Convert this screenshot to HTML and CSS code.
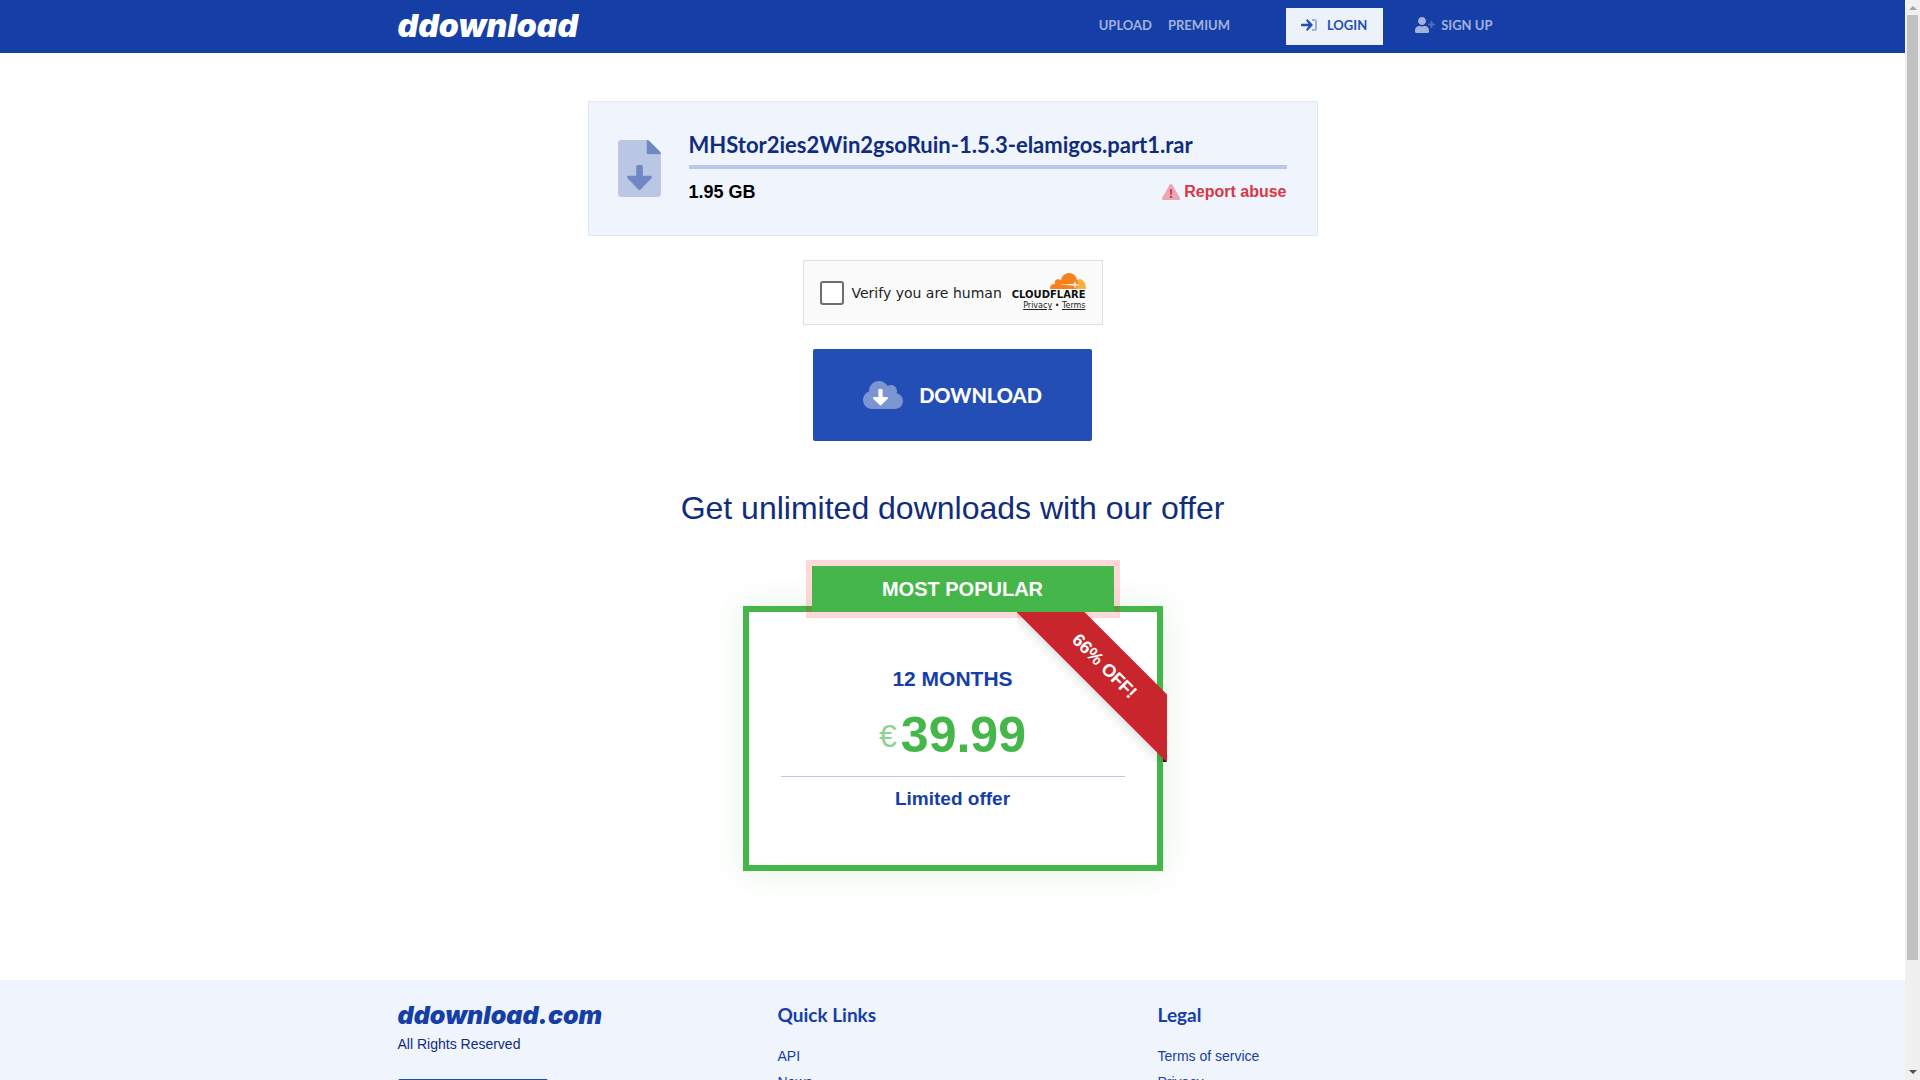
FILE: index.html
```html
<!DOCTYPE html>
<html lang="en">
<head>
    <meta charset="UTF-8">
    <meta name="viewport" content="width=device-width, initial-scale=1.0">
    <title>Download MHStor2ies2Win2gsoRuin-1.5.3-elamigos.part1.rar</title>
    <link rel="stylesheet" href="styles.css">
</head>
<body>
    <header class="header">
        <div class="container header-inner">
            <a href="#" class="logo">ddownload</a>
            <nav class="nav">
                <a href="#" class="nav-link">UPLOAD</a>
                <a href="#" class="nav-link">PREMIUM</a>
                <a href="#" class="nav-login">
                    <svg class="icon-login" viewBox="0 0 16 12" fill="currentColor">
                        <path d="M5 1.200 6.300 0 12 6l-5.700 6L5 10.800 7.500 7.200H1Q0 7.200 0 6.500v-1Q0 4.800 1 4.800h6.500z"/>
                        <path opacity=".4" d="M11 0h2.500A2.500 2.500 0 0 1 16 2.500v7a2.500 2.500 0 0 1-2.500 2.500H11v-2h2.500q.5 0 .5-.5v-7q0-.5-.5-.5H11z"/>
                    </svg>
                    LOGIN
                </a>
                <a href="#" class="nav-signup">
                    <svg class="icon-user" viewBox="0 0 640 512" fill="currentColor">
                        <path d="M224 256c70.700 0 128-57.300 128-128S294.700 0 224 0 96 57.300 96 128s57.300 128 128 128zm89.600 32h-16.700c-22.200 10.200-46.900 16-72.900 16s-50.600-5.800-72.900-16h-16.700C60.200 288 0 348.200 0 422.400V464c0 26.500 21.500 48 48 48h352c26.500 0 48-21.500 48-48v-41.600c0-74.200-60.200-134.400-134.400-134.400z"/>
                        <path opacity=".4" d="M624 208h-64v-64c0-8.800-7.200-16-16-16h-32c-8.800 0-16 7.200-16 16v64h-64c-8.800 0-16 7.200-16 16v32c0 8.800 7.200 16 16 16h64v64c0 8.800 7.200 16 16 16h32c8.800 0 16-7.200 16-16v-64h64c8.800 0 16-7.200 16-16v-32c0-8.800-7.200-16-16-16z"/>
                    </svg>
                    SIGN UP
                </a>
            </nav>
        </div>
    </header>

    <main class="main">
        <section class="file-info">
            <svg class="icon-file" viewBox="0 0 384 512" fill="#6f87c3">
                <path opacity=".42" d="M384 128H256V0H24C10.700 0 0 10.700 0 24v464c0 13.300 10.700 24 24 24h336c13.300 0 24-10.700 24-24z"/>
                <path d="M384 122v6H256V0h6c6 0 12 2 17 7l98 98c5 5 7 11 7 17zM176 224h32q14 0 14 14v82h66c16 0 20 16 10 26l-96 98q-10 10-20 0l-96-98c-10-10-6-26 10-26h66v-82q0-14 14-14z"/>
            </svg>
            <div class="file-text">
                <h1 class="file-name">MHStor2ies2Win2gsoRuin-1.5.3-elamigos.part1.rar</h1>
                <div class="file-meta">
                    <span class="file-size">1.95 GB</span>
                    <a href="#" class="report">
                        <svg class="icon-warn" viewBox="0 0 576 512" fill="currentColor">
                            <path opacity=".4" d="M570 440c18 32-5 72-42 72H48c-37 0-60-40-42-72L246 24c19-32 65-32 84 0z"/>
                            <path d="M252 170h72l-10 170h-52zM288 372a40 40 0 1 0 1 0z"/>
                        </svg>
                        Report abuse
                    </a>
                </div>
            </div>
        </section>

        <div class="captcha">
            <label class="captcha-label">
                <input type="checkbox" class="captcha-box">
                Verify you are human
            </label>
            <div class="captcha-brand">
                <svg class="cf-cloud" viewBox="0 0 36 16">
                    <path fill="#fbad41" d="M25 16V9q2-3 5-3c4 1 6 5 6 10z"/>
                    <path fill="#f6821f" d="M0 16c0-3 1-5 5-5-1-4 2-6 6-4C12 2 16 0 19 0c5 0 8 4 8 8 2 1 1 5-1 8z"/>
                    <path fill="#fff" d="M10 11.500 24 10.800l1-3 1 3.200 4 1-4 1-1 3-1-3.200z" opacity=".85"/>
                </svg>
                <span class="cf-name">CLOUDFLARE</span>
                <div class="cf-links">
                    <a href="#">Privacy</a> <span>•</span> <a href="#">Terms</a>
                </div>
            </div>
        </div>

        <button type="button" class="btn-download">
            <svg class="icon-cloud" viewBox="0 32 640 448" fill="#fff">
                <path opacity=".4" d="M537.600 226.600c4.100-10.700 6.400-22.400 6.400-34.600 0-53-43-96-96-96-19.700 0-38.100 6-53.300 16.200C367 64.200 315.300 32 256 32c-88.400 0-160 71.600-160 160 0 2.700.1 5.400.2 8.100C40.200 219.800 0 273.200 0 336c0 79.500 64.500 144 144 144h368c70.700 0 128-57.300 128-128 0-61.900-44-113.600-102.400-125.400z"/>
                <path d="M260 160h40q14 0 14 14v114h72c16 0 20 16 10 26L290 420q-10 8-20 0L164 314c-10-10-6-26 10-26h72V174q0-14 14-14z"/>
            </svg>
            DOWNLOAD
        </button>

        <h2 class="offer-title">Get unlimited downloads with our offer</h2>

        <div class="offer">
            <div class="popular">MOST POPULAR</div>
            <div class="ribbon"><span>66% OFF!</span></div>
            <h3 class="offer-period">12 MONTHS</h3>
            <div class="price"><span class="currency">€</span>39.99</div>
            <p class="offer-note">Limited offer</p>
        </div>
    </main>

    <footer class="footer">
        <div class="container footer-inner">
            <div class="footer-col">
                <a href="#" class="footer-logo">ddownload.com</a>
                <p class="rights">All Rights Reserved</p>
                <button type="button" class="btn-lang">English</button>
            </div>
            <div class="footer-col">
                <h4>Quick Links</h4>
                <ul>
                    <li><a href="#">API</a></li>
                    <li><a href="#">News</a></li>
                </ul>
            </div>
            <div class="footer-col">
                <h4>Legal</h4>
                <ul>
                    <li><a href="#">Terms of service</a></li>
                    <li><a href="#">Privacy</a></li>
                </ul>
            </div>
        </div>
    </footer>

    <div class="scrollbar">
        <i class="arrow-up"></i>
        <i class="thumb"></i>
        <i class="arrow-down"></i>
    </div>
</body>
</html>
```
FILE: styles.css
```css
* {
    margin: 0;
    padding: 0;
    box-sizing: border-box;
}

body {
    font-family: "Liberation Sans", Arial, sans-serif;
    height: 100vh;
    overflow: hidden;
    padding-right: 15px;
    background: #fff;
    color: #0f2d7c;
}

a {
    text-decoration: none;
    color: inherit;
}

ul {
    list-style: none;
}

.container {
    max-width: 1140px;
    margin: 0 auto;
    padding: 0 15px;
}

/* Header */
.header {
    background: #153ea7;
}

.header-inner {
    display: flex;
    justify-content: space-between;
    align-items: center;
    height: 53px;
}

.logo {
    padding-bottom: 2px;
    font: italic 900 32px/40px Inter, sans-serif;
    color: #fff;
}

.nav {
    display: flex;
    align-items: center;
    font: bold 13px/20px Lato, sans-serif;
    color: #a2b2dd;
    padding-right: 15px;
}

.nav-link {
    margin-right: 16px;
    padding-bottom: 3px;
}

.nav-login {
    display: flex;
    align-items: center;
    gap: 10px;
    height: 37px;
    margin: 0 32px 0 40px;
    padding: 0 16px 3px 15px;
    background: #edf1f9;
    color: #234eb5;
}

.nav-signup {
    display: flex;
    align-items: center;
    gap: 6px;
    padding-bottom: 3px;
}

.icon-login {
    width: 16px;
    height: 12px;
}

.icon-user {
    width: 20px;
    height: 16px;
}

/* File box */
.main {
    display: flex;
    flex-direction: column;
    align-items: center;
    padding: 48px 15px 109px;
}

.file-info {
    display: flex;
    align-items: center;
    gap: 28px;
    width: 100%;
    max-width: 730px;
    padding: 28px 30px 28px 29px;
    background: #f0f4fc;
    border: 1px solid #dfe6f5;
}

.icon-file {
    width: 43px;
    height: 57px;
}

.file-text {
    flex: 1;
}

.file-name {
    font: bold 22px/30px Lato, sans-serif;
    padding-bottom: 5px;
    border-bottom: 4px solid #b9c7e8;
}

.file-meta {
    display: flex;
    justify-content: space-between;
    align-items: center;
    padding: 9px 0 1px;
    line-height: 28px;
    font-weight: bold;
}

.file-size {
    font-size: 18px;
    color: #000;
}

.report {
    display: flex;
    align-items: center;
    gap: 4px;
    font-size: 16px;
    color: #dc3545;
}

.icon-warn {
    width: 18px;
    height: 16px;
}

/* Captcha */
.captcha {
    display: flex;
    justify-content: space-between;
    align-items: center;
    width: 300px;
    height: 65px;
    margin: 24px 0;
    padding: 0 16px;
    background: #fafafa;
    border: 1px solid #e0e0e0;
    font-family: "DejaVu Sans", sans-serif;
    color: #232323;
}

.captcha-label {
    display: flex;
    align-items: center;
    gap: 8px;
    font-size: 14px;
    white-space: nowrap;
}

.captcha-box {
    appearance: none;
    width: 24px;
    height: 24px;
    background: #fff;
    border: 2px solid #6d6d6d;
    border-radius: 3px;
}

.captcha-brand {
    display: flex;
    flex-direction: column;
    align-items: flex-end;
}

.cf-cloud {
    width: 36px;
    height: 16px;
}

.cf-name {
    font: bold 10px/11px "DejaVu Sans", sans-serif;
    color: #111;
}

.cf-links {
    font-size: 8px;
    line-height: 12px;
}

.cf-links a {
    text-decoration: underline;
}

/* Download button */
.btn-download {
    display: flex;
    align-items: center;
    gap: 16px;
    height: 92px;
    padding: 0 50px;
    background: #234eb5;
    border: none;
    border-radius: 2px;
    font: 900 20px/28px Lato, sans-serif;
    color: #fff;
}

.icon-cloud {
    width: 40px;
    height: 28px;
}

/* Offer */
.offer-title {
    margin: 48px 0 79px;
    font-size: 32px;
    font-weight: normal;
    line-height: 38px;
}

.offer {
    position: relative;
    width: 420px;
    padding: 54px 32px;
    border: 6px solid #45b649;
    box-shadow: 0 0 32px rgba(69, 182, 73, 0.15);
    text-align: center;
    color: #153ea7;
}

.popular {
    position: absolute;
    top: -46px;
    left: 63px;
    width: 302px;
    background: #45b649;
    box-shadow: 0 0 0 6px rgba(255, 0, 0, 0.15);
    font-size: 20px;
    font-weight: bold;
    line-height: 46px;
    color: #fff;
}

.ribbon {
    position: absolute;
    top: 0;
    right: -10px;
    width: 150px;
    height: 150px;
    overflow: hidden;
}

.ribbon::before {
    content: '';
    position: absolute;
    right: 0;
    bottom: 0;
    width: 4px;
    height: 4px;
    background: #3e0a0a;
}

.ribbon span {
    position: absolute;
    top: 30px;
    left: -25px;
    width: 225px;
    background: #c8252c;
    box-shadow: 0 5px 10px rgba(0, 0, 0, 0.1);
    font-size: 18px;
    font-weight: bold;
    line-height: 48px;
    color: #fff;
    transform: rotate(45deg);
}

.offer-period {
    font-size: 21px;
    line-height: 26px;
}

.price {
    display: flex;
    justify-content: center;
    align-items: center;
    gap: 4px;
    padding: 14px 0 12px;
    border-bottom: 1px solid #bcc8e8;
    font-size: 50px;
    font-weight: bold;
    line-height: 58px;
    color: #45b649;
}

.currency {
    padding-top: 2px;
    font-size: 32px;
    font-weight: normal;
    line-height: 38px;
    opacity: 0.6;
}

.offer-note {
    padding-top: 10px;
    font-size: 19px;
    font-weight: bold;
    line-height: 24px;
}

/* Footer */
.footer {
    background: #f0f4fc;
    color: #153ea7;
}

.footer-inner {
    display: grid;
    grid-template-columns: repeat(3, 1fr);
    column-gap: 30px;
    height: 220px;
    padding-top: 20px;
}

.footer-logo {
    display: block;
    font: italic 900 25px/30px Inter, sans-serif;
}

.rights {
    margin: 4px 0 24px;
    font-size: 14px;
    line-height: 21px;
    color: #0f2d7c;
}

.btn-lang {
    width: 150px;
    height: 38px;
    background: #234eb5;
    border: none;
    border-radius: 2px;
    color: #fff;
}

.footer-col h4 {
    margin-bottom: 13px;
    font: bold 19px/30px Lato, sans-serif;
}

.footer-col li {
    font-size: 14px;
    line-height: 26px;
}

/* Scrollbar */
.scrollbar {
    position: fixed;
    top: 0;
    right: 0;
    bottom: 0;
    width: 15px;
    display: flex;
    flex-direction: column;
    align-items: center;
    background: #f0f0f0;
}

.arrow-up,
.arrow-down {
    border: 4px solid transparent;
}

.arrow-up {
    margin: 2px 0 5px;
    border-bottom-color: #a3a3a3;
}

.thumb {
    width: 11px;
    height: 87.5%;
    background: #c1c1c1;
}

.arrow-down {
    margin: auto 0 2px;
    border-top-color: #505050;
}
```
